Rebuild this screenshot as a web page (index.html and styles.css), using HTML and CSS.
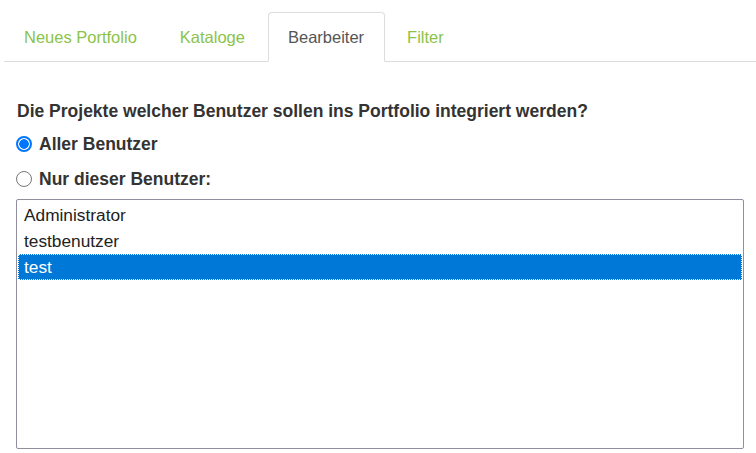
FILE: index.html
```html
<!DOCTYPE html>
<html lang="de">
<head>
<meta charset="utf-8">
<link rel="stylesheet" href="styles.css">
</head>
<body>
<ul class="tabs">
  <li class="tab"><a>Neues Portfolio</a></li>
  <li class="tab"><a>Kataloge</a></li>
  <li class="tab active"><a>Bearbeiter</a></li>
  <li class="tab"><a>Filter</a></li>
</ul>
<div class="content">
  <p class="question">Die Projekte welcher Benutzer sollen ins Portfolio integriert werden?</p>
  <label class="choice"><span class="radio checked"></span>Aller Benutzer</label>
  <label class="choice"><span class="radio"></span>Nur dieser Benutzer:</label>
  <div class="listbox">
    <div class="option">Administrator</div>
    <div class="option">testbenutzer</div>
    <div class="option selected">test</div>
  </div>
</div>
</body>
</html>
```
FILE: styles.css
```css
html, body {
  margin: 0;
  padding: 0;
  background: #fff;
  font-family: "Liberation Sans", Arial, sans-serif;
  color: #333;
}
.tabs {
  list-style: none;
  margin: 0 0 0 4px;
  padding: 12px 0 0 0;
  display: flex;
  gap: 2px;
  border-bottom: 1px solid #ddd;
}
.tab {
  margin-bottom: -1px;
}
.tab a {
  display: block;
  padding: 14px 20px 14px 19px;
  font-size: 16.5px;
  line-height: 20px;
  color: #8bc34a;
  border: 1px solid transparent;
  border-radius: 4px 4px 0 0;
}
.tab.active a {
  color: #555;
  background: #fff;
  border-color: #ddd;
  border-bottom-color: #fff;
}
.content {
  padding: 0 12px 0 16px;
}
.question {
  margin: 39px 0 0 1px;
  font-size: 17.5px;
  font-weight: bold;
  line-height: 20px;
  color: #333;
}
.choice {
  display: flex;
  align-items: center;
  gap: 7px;
  font-size: 17.5px;
  font-weight: bold;
  line-height: 20px;
  color: #333;
  height: 35px;
}
.choice:first-of-type {
  margin-top: 5px;
}
.radio {
  box-sizing: border-box;
  width: 16px;
  height: 16px;
  border-radius: 50%;
  border: 1px solid #767676;
  background: #fff;
  flex: none;
}
.radio.checked {
  border: 2px solid #0075ff;
  background: radial-gradient(circle, #0075ff 0 4.5px, #fff 5px);
}
.listbox {
  box-sizing: border-box;
  height: 250px;
  border: 1px solid #8f8f9d;
  border-radius: 2px;
  padding: 2px 1px;
  margin-top: 3px;
}
.option {
  box-sizing: border-box;
  height: 26px;
  line-height: 24px;
  padding: 0 5px;
  font-size: 17.3px;
  color: #222;
  border: 1px solid transparent;
}
.option.selected {
  background: #0078d7;
  color: #fff;
  border: 1px dotted #fff;
}
```
